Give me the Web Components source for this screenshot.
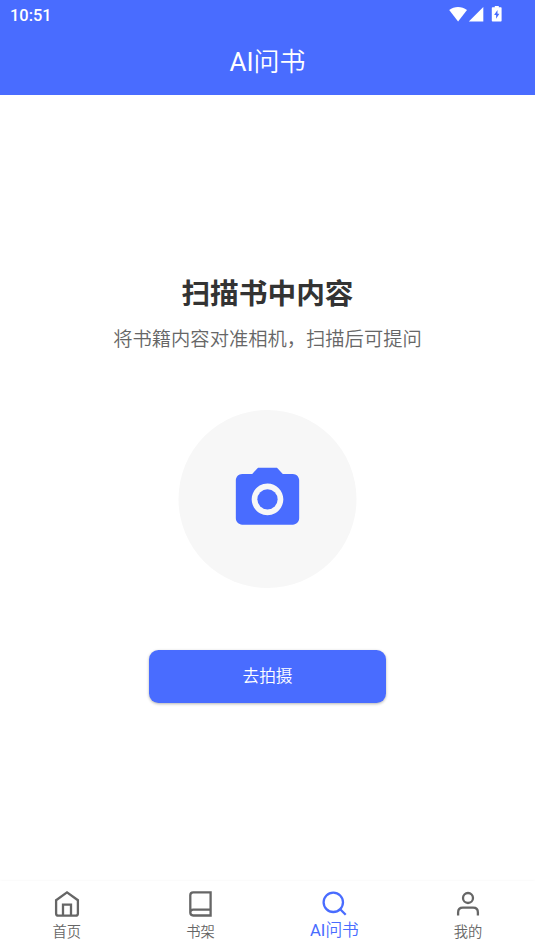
<!DOCTYPE html>
<html lang="zh-CN">
<head>
<meta charset="utf-8">
<title>AI问书</title>
<style>
html,body{margin:0;height:100%;background:#fff;font-family:Roboto,"Noto Sans CJK SC",sans-serif;font-weight:350}
</style>
</head>
<body>
<book-app></book-app>
<script>
const define = (name, html) => {
  const t = document.createElement('template');
  t.innerHTML = html;
  customElements.define(name, class extends HTMLElement {
    constructor() {
      super();
      this.attachShadow({mode: 'open'}).append(t.content.cloneNode(true));
    }
  });
};

define('status-bar', `
<style>
:host{display:flex;justify-content:space-between;height:29px;box-sizing:border-box;padding:0 32px 0 10px;color:#fff;font-size:16.400px;font-weight:500;line-height:31px}
svg{display:block;width:54px;height:29px;fill:#fff}
</style>
<span>10:51</span>
<svg viewBox="0 0 54 29">
<path d="M.2 10.1C5.3 5.9 12.700 5.900 18 10.100L9.100 21.400Z"/>
<path d="M19.800 21.400L34.300 6.900V21.400Z"/>
<path transform="translate(1.600)" fill-rule="evenodd" d="M42 7.300H44.200V6H48.200V7.300H50.300Q51 7.300 51 8V20.700Q51 21.500 50.300 21.500H42Q41.200 21.500 41.200 20.700V8Q41.200 7.300 42 7.300ZM46.900 10.100L43.500 15.100H45.500V18.800L48.800 13.800H46.900Z"/>
</svg>`);

define('app-header', `
<style>
:host{display:block;height:95px;background:#496cff;color:#fff}
h1{margin:0;font-size:26px;font-weight:350;line-height:66px;text-align:center}
</style>
<status-bar></status-bar>
<h1><slot></slot></h1>`);

define('camera-badge', `
<style>
:host{display:flex;width:178px;height:178px}
svg{width:178px;height:178px;overflow:visible}
</style>
<svg viewBox="0 0 178 178"><circle cx="88.500" cy="89" r="89" fill="#f7f7f7"/><g transform="translate(50.500 51.300) scale(3.167)" fill="#496cff"><circle cx="12" cy="12" r="3.2"/><path d="M9 2L7.170 4H4C2.900 4 2 4.900 2 6V18C2 19.100 2.900 20 4 20H20C21.100 20 22 19.100 22 18V6C22 4.900 21.100 4 20 4H16.830L15 2H9ZM12 17C9.240 17 7 14.760 7 12S9.240 7 12 7S17 9.240 17 12S14.760 17 12 17Z"/></g></svg>`);

define('primary-button', `
<style>
:host{display:block}
button{display:block;width:237.500px;height:52.300px;border:0;border-radius:9.5px;padding:0;background:#496cff;color:#fff;font:350 16.7px/53px Roboto,"Noto Sans CJK SC",sans-serif;box-shadow:0 1px 3px rgba(0,0,0,.3)}
</style>
<button><slot></slot></button>`);

define('scan-panel', `
<style>
:host{display:flex;flex-direction:column;align-items:center;flex:1;padding-top:178px}
h2{margin:0;font-size:28.7px;line-height:42px;font-weight:700;color:#333}
p{margin:11px 0 56px;font-size:19.3px;line-height:28px;color:#666}
primary-button{margin-top:62.300px}
</style>
<h2>扫描书中内容</h2>
<p>将书籍内容对准相机，扫描后可提问</p>
<camera-badge></camera-badge>
<primary-button>去拍摄</primary-button>`);

define('nav-item', `
<style>
:host{display:flex;flex:1;flex-direction:column;align-items:center;color:#666;font-size:14.3px;line-height:20px;padding-top:8px;box-sizing:border-box}
:host([active]){color:#496cff;font-size:16.7px}
:host([active]) .label{margin-top:4px}
.label{margin-top:5px}
::slotted(svg){display:block;width:28px;height:28px;fill:none;stroke:currentColor;stroke-width:2.300}
</style>
<slot name="icon"></slot><span class="label"><slot></slot></span>`);

define('tab-bar', `
<style>
:host{display:flex;height:70px;background:#fff;box-shadow:0 -1px 2px rgba(0,0,0,.025)}
b{font-weight:400}
</style>
<nav-item><svg slot="icon" viewBox="0 -0.4 28 28"><path d="M3.100 10.800L14 3L24.900 10.800V24Q24.900 26.200 22.700 26.200H5.300Q3.100 26.200 3.100 24ZM10 26V15.200H18V26"/></svg>首页</nav-item>
<nav-item><svg slot="icon" viewBox="0.3 -0.4 28 28"><path d="M23.900 20.300H6.500Q3.600 20.300 3.600 23.200Q3.600 26.100 6.500 26.100H23.900V3H6.500Q3.600 3 3.600 5.900V23.200"/></svg>书架</nav-item>
<nav-item active><svg slot="icon" viewBox="0 0 28 28"><circle cx="13.300" cy="13.300" r="9.700"/><path d="M20.200 20.200L25.700 25.700"/></svg><b>AI</b>问书</nav-item>
<nav-item><svg slot="icon" viewBox="0 0 28 28"><circle cx="14" cy="9" r="5"/><path d="M4.100 26.600V23.500Q4.100 18.700 8.900 18.700H19.100Q23.900 18.700 23.900 23.500V26.600"/></svg>我的</nav-item>`);

define('book-app', `
<style>
:host{display:flex;flex-direction:column;height:951px;overflow:hidden}
b{font-weight:400}
</style>
<app-header><b>AI</b>问书</app-header>
<scan-panel></scan-panel>
<tab-bar></tab-bar>`);
</script>
</body>
</html>
